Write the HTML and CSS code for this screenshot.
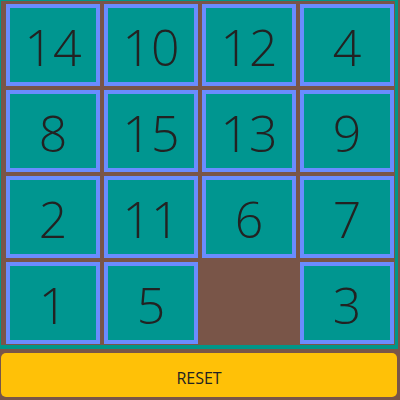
FILE: index.html
```html
<!DOCTYPE html>
<html lang="en">
<head>
<meta charset="utf-8">
<title>15 Puzzle</title>
<link rel="stylesheet" href="styles.css">
</head>
<body>
<div class="game">
  <div class="board">
    <div class="tile">14</div>
    <div class="tile">10</div>
    <div class="tile">12</div>
    <div class="tile">4</div>
    <div class="tile">8</div>
    <div class="tile">15</div>
    <div class="tile">13</div>
    <div class="tile">9</div>
    <div class="tile">2</div>
    <div class="tile">11</div>
    <div class="tile">6</div>
    <div class="tile">7</div>
    <div class="tile">1</div>
    <div class="tile">5</div>
    <div class="cell-empty"></div>
    <div class="tile">3</div>
  </div>
  <button class="reset" type="button">RESET</button>
</div>
</body>
</html>
```
FILE: styles.css
```css
html, body {
  margin: 0;
  padding: 0;
}
body {
  background: #795548;
  width: 400px;
  height: 400px;
  overflow: hidden;
  font-family: "Open Sans", "Noto Sans", sans-serif;
}
.game {
  display: flex;
  flex-direction: column;
  align-items: flex-start;
}
.board {
  display: grid;
  grid-template-columns: repeat(4, 94px);
  grid-auto-rows: 82px;
  gap: 4px;
  padding: 3px 1px 1px 5px;
  border-style: solid;
  border-color: #009688;
  border-width: 1px 3px 4px 1px;
  background: #795548;
}
.tile {
  box-sizing: border-box;
  border: 4px solid #6a8cff;
  background: #009690;
  color: #222;
  font-size: 50px;
  font-weight: 350;
  display: flex;
  align-items: center;
  justify-content: center;
  padding-top: 4px;
}
.reset {
  margin: 4px 0 0 1px;
  width: 396px;
  height: 44px;
  border: 0;
  border-radius: 5px;
  background: #ffc107;
  color: #222;
  font-family: "Open Sans", "Noto Sans", sans-serif;
  font-size: 16px;
  padding: 5px 0 0;
}
```
